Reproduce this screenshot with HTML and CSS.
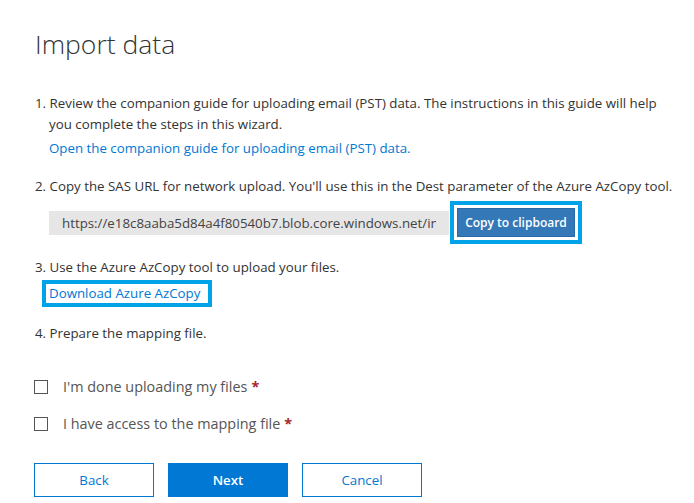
FILE: index.html
```html
<!DOCTYPE html>
<html lang="en">
<head>
  <meta charset="UTF-8" />
  <title>Import data</title>
  <link rel="stylesheet" href="styles.css">
</head>
<body>

<div class="wizard">
  <h1>Import data</h1>

  <div class="step step-1">
    <p><span class="num">1.</span> Review the companion guide for uploading email (PST) data. The instructions in this guide will help</p>
    <p class="indent">you complete the steps in this wizard.</p>
    <p class="indent link-line"><a href="#">Open the companion guide for uploading email (PST) data.</a></p>
  </div>

  <div class="step step-2">
    <p><span class="num">2.</span> Copy the SAS URL for network upload. You'll use this in the Dest parameter of the Azure AzCopy tool.</p>
    <div class="sas-row">
      <input class="sas-url" type="text" readonly value="https://e18c8aaba5d84a4f80540b7.blob.core.windows.net/ingestiondata?sv=2015" />
      <div class="highlight copy-hl"><button class="copy-btn">Copy to clipboard</button></div>
    </div>
  </div>

  <div class="step step-3">
    <p><span class="num">3.</span> Use the Azure AzCopy tool to upload your files.</p>
    <div class="highlight dl-hl"><a href="#">Download Azure AzCopy</a></div>
  </div>

  <div class="step step-4">
    <p><span class="num">4.</span> Prepare the mapping file.</p>
  </div>

  <div class="checks">
    <label class="check"><span class="box"></span>I'm done uploading my files <span class="req">*</span></label>
    <label class="check"><span class="box"></span>I have access to the mapping file <span class="req">*</span></label>
  </div>

  <div class="buttons">
    <button class="btn">Back</button>
    <button class="btn primary">Next</button>
    <button class="btn">Cancel</button>
  </div>
</div>

</body>
</html>
```

FILE: styles.css
```css
body {
  font-family: "Open Sans", "Noto Sans", sans-serif;
  background-color: white;
  color: #333;
  margin: 0;
  padding: 0;
}

.wizard {
  padding: 25px 0 0 34px;
}

h1 {
  font-size: 26.5px;
  font-weight: 300;
  color: #333;
  margin: 0 0 0 1px;
  line-height: 38px;
}

.step {
  font-size: 13.3px;
}

.step-1 {
  margin-top: 30px;
}

.step-2 {
  margin-top: 17px;
}

.step-3 {
  margin-top: 13px;
}

.step-4 {
  margin-top: 16px;
}

.step p {
  margin: 0 0 0 1px;
  line-height: 21px;
  white-space: nowrap;
}

.indent {
  padding-left: 14px;
}

.link-line {
  margin-top: 3px !important;
}

a {
  color: #0078d4;
  text-decoration: none;
}

.sas-row {
  display: flex;
  align-items: center;
  margin: 4px 0 0 15px;
}

.sas-url {
  box-sizing: border-box;
  width: 400px;
  height: 24px;
  margin: 0;
  border: none;
  outline: none;
  background: #e6e6e6;
  padding: 0 13px;
  font-family: inherit;
  font-size: 13.3px;
  color: #444;
}

.highlight {
  border: 4px solid #00a2e8;
  background: white;
}

.copy-hl {
  margin-left: 1px;
  padding: 3px;
}

.copy-btn {
  width: 118px;
  height: 29px;
  background: #3478b8;
  border: 1px solid #2a6aa6;
  color: white;
  font-family: inherit;
  font-size: 12px;
  font-weight: 600;
}

.dl-hl {
  display: inline-block;
  margin: 2px 0 0 8px;
  padding: 0 8px 0 3px;
  line-height: 19px;
}

.checks {
  margin-top: 33px;
  display: flex;
  flex-direction: column;
  gap: 18px;
}

.check {
  display: flex;
  align-items: center;
  font-size: 14.4px;
  color: #555;
  line-height: 19px;
}

.box {
  width: 12px;
  height: 12px;
  border: 1px solid #555;
  margin-right: 15px;
}

.req {
  color: #a4262c;
  font-weight: 700;
  margin-left: 4px;
}

.buttons {
  display: flex;
  gap: 14px;
  margin-top: 30px;
}

.btn {
  width: 120px;
  height: 34px;
  border: 1px solid #0078d4;
  background: white;
  color: #0078d4;
  font-family: inherit;
  font-size: 13.3px;
}

.btn.primary {
  background: #0078d4;
  color: white;
  font-weight: 600;
}
```
